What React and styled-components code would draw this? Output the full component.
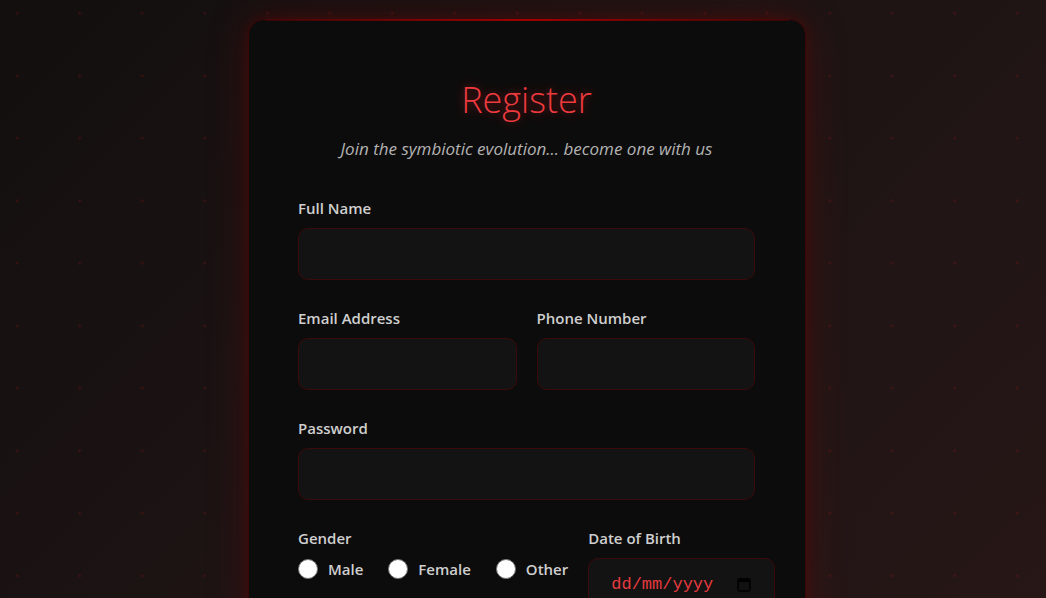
import styled, { createGlobalStyle } from "styled-components";

const GlobalStyle = createGlobalStyle`
  * { box-sizing: border-box; }
  html, body { margin: 0; padding: 0; }
  body {
    font-family: "Open Sans", "Liberation Sans", sans-serif;
    background: #171111;
    overflow: hidden;
  }
`;

const genders = ["Male", "Female", "Other"];

const App = () => {
  return (
    <Page>
      <GlobalStyle />
      <Card>
        <Title>Register</Title>
        <Subtitle>Join the symbiotic evolution... become one with us</Subtitle>

        <Field>
          <Label>Full Name</Label>
          <Input type="text" />
        </Field>

        <Row>
          <Field>
            <Label>Email Address</Label>
            <Input type="email" />
          </Field>
          <Field>
            <Label>Phone Number</Label>
            <Input type="tel" />
          </Field>
        </Row>

        <Field>
          <Label>Password</Label>
          <Input type="password" />
        </Field>

        <BottomRow>
          <GenderField>
            <Label>Gender</Label>
            <RadioGroup>
              {genders.map((g) => (
                <RadioOption key={g}>
                  <RadioDot />
                  {g}
                </RadioOption>
              ))}
            </RadioGroup>
          </GenderField>
          <DateField>
            <Label>Date of Birth</Label>
            <DateBox>
              <DateText>dd/mm/yyyy</DateText>
              <svg width="14" height="15" viewBox="0 0 14 15">
                <rect x="1" y="2" width="12" height="12" rx="1.5" fill="#111" stroke="#000" strokeWidth="1.5" />
                <rect x="1" y="2" width="12" height="3" fill="#000" />
                <rect x="3" y="0.5" width="1.5" height="3" fill="#000" />
                <rect x="9.5" y="0.5" width="1.5" height="3" fill="#000" />
              </svg>
            </DateBox>
          </DateField>
        </BottomRow>
      </Card>
    </Page>
  );
};

const Page = styled.div`
  min-height: 100vh;
  display: flex;
  justify-content: center;
  padding: 19px 0 0 8px;
  background-color: #1a1212;
  background-image:
    radial-gradient(circle, rgba(140, 20, 20, 0.28) 1px, transparent 1.6px),
    linear-gradient(135deg, #130f0f 0%, #1e1414 50%, #281717 100%);
  background-size: 62.5px 62.5px, 100% 100%;
  background-position: -14px -18px, 0 0;
`;

const Card = styled.div`
  position: relative;
  width: 558px;
  height: 700px;
  padding: 56px 50px 40px 49px;
  background: #0d0c0c;
  border: 1px solid #3a0707;
  border-radius: 16px;
  box-shadow: 0 0 40px rgba(150, 0, 0, 0.28), 0 0 12px rgba(120, 0, 0, 0.25);
  display: flex;
  flex-direction: column;

  &::before {
    content: "";
    position: absolute;
    top: -1px;
    left: 16px;
    right: 16px;
    height: 2px;
    background: linear-gradient(90deg, rgba(120, 0, 0, 0.3), #a00000 50%, rgba(120, 0, 0, 0.3));
  }
`;

const Title = styled.h1`
  margin: 0;
  text-align: center;
  font-family: "Open Sans", sans-serif;
  font-weight: 300;
  font-size: 36px;
  line-height: 48px;
  color: #ee3a3f;
  text-shadow: 0 0 10px rgba(255, 40, 40, 0.45);
`;

const Subtitle = styled.p`
  margin: 14px 0 39px;
  text-align: center;
  font-family: "Open Sans", sans-serif;
  font-style: italic;
  font-size: 17px;
  line-height: 22px;
  color: #b3b3b3;
`;

const Field = styled.div`
  display: flex;
  flex-direction: column;
  margin-bottom: 29px;
`;

const Row = styled.div`
  display: flex;
  gap: 20px;

  & > ${Field} {
    flex: 1;
    min-width: 0;
  }
`;

const Label = styled.label`
  font-family: "Open Sans", sans-serif;
  font-weight: 600;
  font-size: 15px;
  line-height: 18px;
  color: #cfcfcf;
  margin-bottom: 11px;
`;

const Input = styled.input`
  height: 52px;
  width: 100%;
  background: #131313;
  border: 1px solid #3b0a0a;
  border-radius: 10px;
  color: #ddd;
  padding: 0 15px;
  font-size: 16px;
  outline: none;
`;

const BottomRow = styled.div`
  display: flex;
  gap: 20px;
`;

const GenderField = styled.div`
  display: flex;
  flex-direction: column;
`;

const RadioGroup = styled.div`
  display: flex;
  gap: 25px;
  margin-top: 1px;
`;

const RadioOption = styled.label`
  display: flex;
  align-items: center;
  gap: 10px;
  font-family: "Open Sans", sans-serif;
  font-weight: 600;
  font-size: 15px;
  color: #cfcfcf;
`;

const RadioDot = styled.span`
  width: 20px;
  height: 20px;
  border-radius: 50%;
  background: #fff;
  border: 1px solid #767676;
`;

const DateField = styled.div`
  display: flex;
  flex-direction: column;
  width: 187px;
  flex-shrink: 0;
`;

const DateBox = styled.div`
  height: 52px;
  display: flex;
  align-items: center;
  justify-content: space-between;
  padding: 0 23px 0 22px;
  background: #131313;
  border: 1px solid #3b0a0a;
  border-radius: 10px;
`;

const DateText = styled.span`
  font-family: "Liberation Mono", monospace;
  font-size: 17px;
  color: #e63a3f;
`;

export default App;
